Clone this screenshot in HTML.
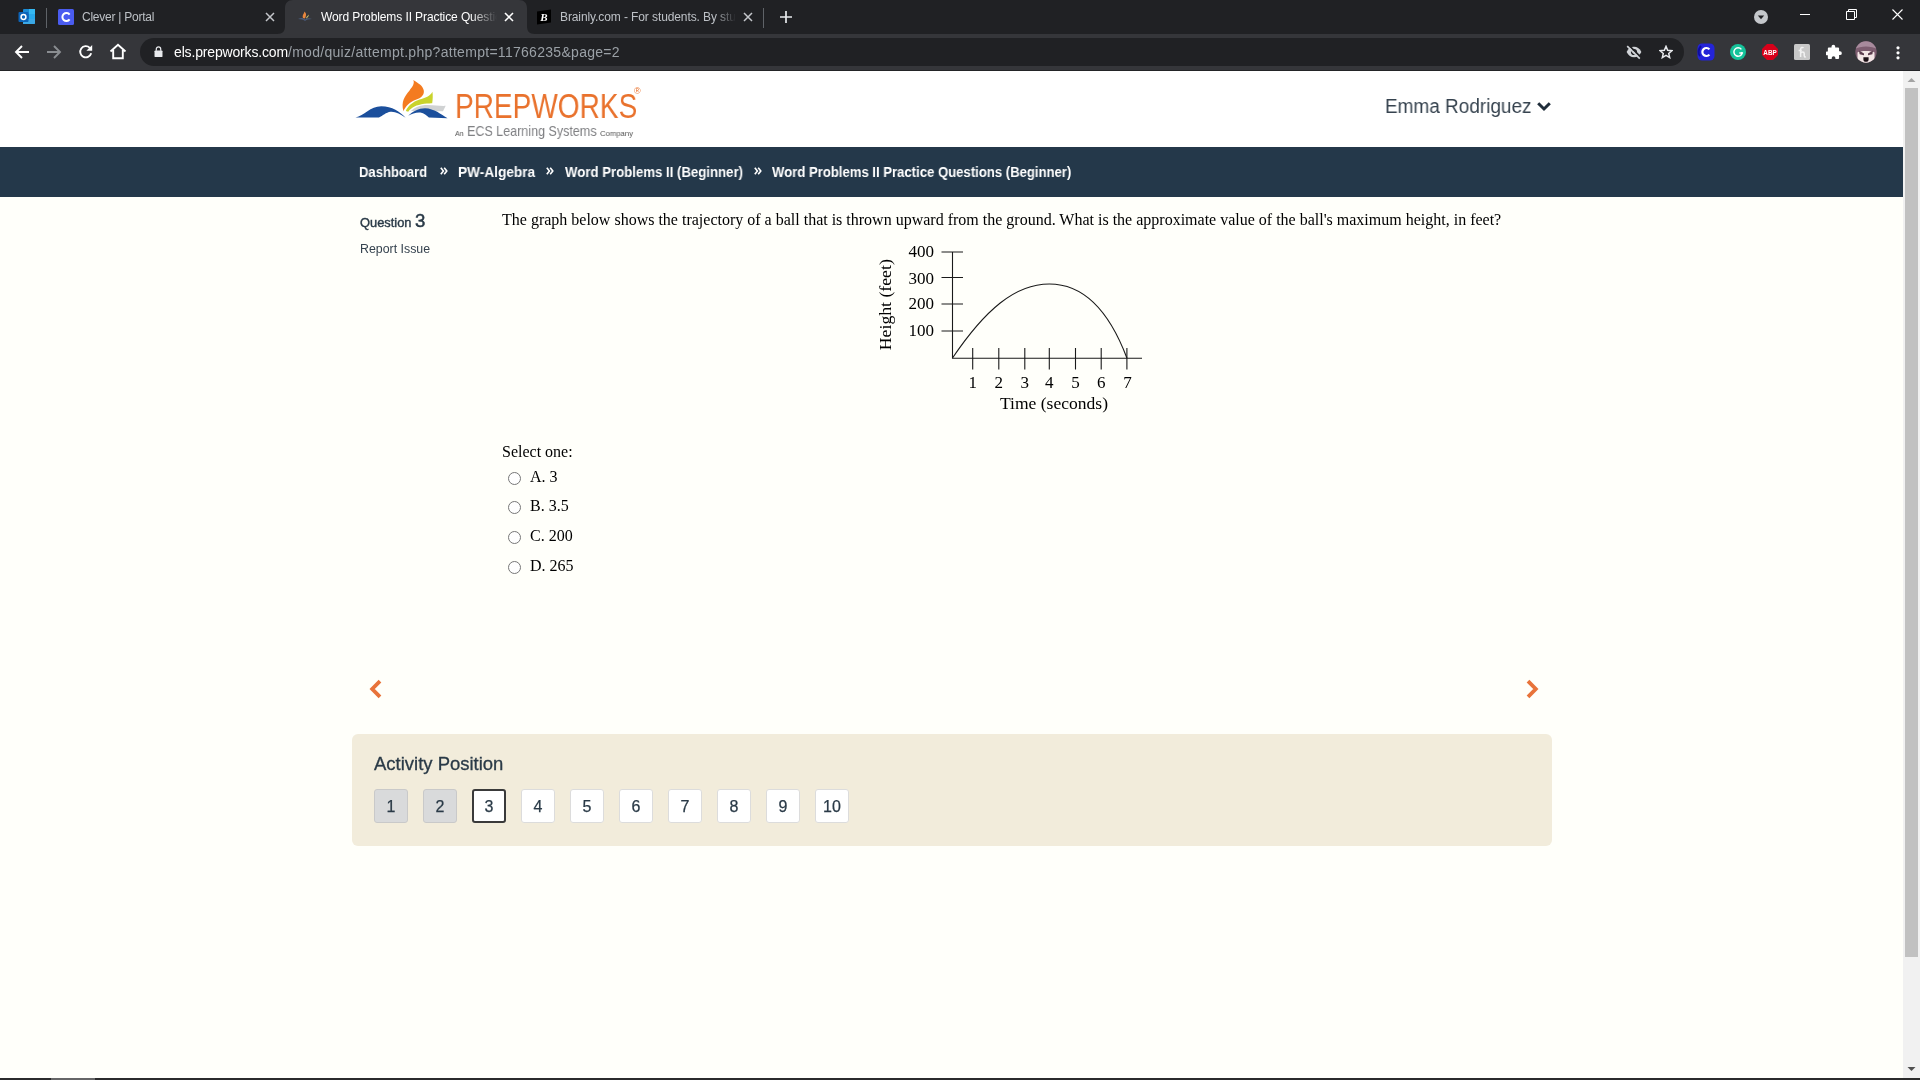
<!DOCTYPE html>
<html lang="en">
<head>
<meta charset="utf-8">
<title>Word Problems II Practice Questions (Beginner)</title>
<style>
*{box-sizing:border-box;margin:0;padding:0}
html,body{width:1920px;height:1080px;overflow:hidden;background:#fffffa;font-family:"Liberation Sans",sans-serif;}
.abs{position:absolute}
#page>*,#chrome>*,#sb,#botbar{will-change:transform}
#chrome{position:absolute;left:0;top:0;width:1920px;height:71px;background:#35363a;}
#tabstrip{position:absolute;left:0;top:0;width:1920px;height:34px;background:#202124;}
#toolbar{position:absolute;left:0;top:34px;width:1920px;height:37px;background:#35363a;}
.tabtxt{position:absolute;top:9px;font-size:12px;line-height:16px;color:#bdc1c6;white-space:nowrap;overflow:hidden;letter-spacing:-0.1px}
#omni{position:absolute;left:140px;top:38px;width:1544px;height:28px;border-radius:14px;background:#202124;}
#url{position:absolute;left:174px;top:43px;font-size:14px;line-height:18px;color:#9aa0a6;white-space:nowrap}
#url b{color:#fff;font-weight:normal;letter-spacing:-0.16px}#url i{font-style:normal;letter-spacing:0.29px}
#page{position:absolute;left:0;top:71px;width:1903px;height:1007px;background:#fffffa;overflow:hidden}
#hdr{position:absolute;left:0;top:0;width:1903px;height:76px;background:#fff}
#nav{position:absolute;left:0;top:76px;width:1903px;height:50px;background:#24384a}
.crumb{position:absolute;top:92px;transform-origin:0 0;font-size:14px;line-height:18px;font-weight:bold;color:#fff;white-space:nowrap}
#sb{position:absolute;left:1903px;top:71px;width:17px;height:1007px;background:#f1f1f1}
#thumb{position:absolute;left:2px;top:17px;width:13px;height:869px;background:#c1c1c1}
#botbar{position:absolute;left:0;top:1078px;width:1920px;height:2px;background:#2b2b2b}
.serif{font-family:"Liberation Serif",serif;color:#000}

.radio{position:absolute;left:508px;width:13px;height:13px;border-radius:50%;border:1px solid #767676;background:#fff}
.ans{left:530px;font-size:16px;line-height:18px;white-space:nowrap}
.pb{position:absolute;top:718px;width:34px;height:34px;border:1px solid #dcdcdc;border-radius:3px;background:#fff;color:#2a3a47;font-size:16px;line-height:34px;text-align:center;-webkit-text-stroke:0.25px #2a3a47}
.pb.done{background:#d9dadb;border-color:#c9c9c9}
.pb.cur{border:2px solid #3a3a3a;line-height:32px}
</style>
</head>
<body>
<div id="chrome">
  <div id="tabstrip"></div>
  <div id="toolbar"></div>
  <div class="abs" style="left:0;top:70px;width:1920px;height:1px;background:#232427"></div>
  <!-- pinned outlook tab -->
  <svg class="abs" style="left:18px;top:8px" width="18" height="18" viewBox="0 0 18 18">
    <rect x="5" y="1" width="12" height="15" rx="1" fill="#1a8ad4"/>
    <rect x="11" y="1" width="6" height="5" fill="#35b8f1"/>
    <rect x="5" y="6" width="6" height="5" fill="#1373c2"/>
    <rect x="11" y="6" width="6" height="5" fill="#28a8ea"/>
    <path d="M5 11h12v4a1 1 0 0 1-1 1H5z" fill="#3aa8e6"/>
    <rect x="0.5" y="4" width="10" height="10" rx="1" fill="#0c64b8"/>
    <circle cx="5.5" cy="9" r="2.4" fill="none" stroke="#fff" stroke-width="1.5"/>
  </svg>
  <div class="abs" style="left:46px;top:8px;width:1px;height:20px;background:#5f6368"></div>
  <!-- clever tab -->
  <svg class="abs" style="left:58px;top:9px" width="16" height="16" viewBox="0 0 16 16">
    <rect width="16" height="16" rx="1.5" fill="#4a5cf0"/>
    <path d="M11.6 5.6A4 4 0 1 0 11.6 10.4" fill="none" stroke="#fff" stroke-width="2"/>
  </svg>
  <div class="tabtxt" style="left:82px;width:170px;letter-spacing:-0.25px">Clever | Portal</div>
  <svg class="abs" style="left:264px;top:11px" width="12" height="12" viewBox="0 0 12 12"><path d="M2 2L10 10M10 2L2 10" stroke="#c4c7cb" stroke-width="1.5" fill="none"/></svg>
  <!-- active tab -->
  <svg class="abs" style="left:277px;top:0" width="258" height="34" viewBox="0 0 258 34">
    <path d="M0 34C6 34 8 31 8 26V8C8 3 11 0 16 0H242C247 0 250 3 250 8V26C250 31 252 34 258 34Z" fill="#35363a"/>
  </svg>
  <svg class="abs" style="left:298px;top:10px" width="16" height="14" viewBox="0 0 16 14">
    <path d="M0 9C3 7.5 5 7.5 7 9.5C9 7.8 11 7.8 14 9C11 9.2 9 9.6 7 11C5 9.6 3 9.2 0 9Z" fill="#4a5a78"/>
    <path d="M5 8C4 5 6 4 6.5 1.5C9 4 8 6 7 8.5Z" fill="#e9873e"/>
    <path d="M8 8C9 6 10 5.5 10.8 4.5C11 6 10 7.5 8 8.6Z" fill="#c9c06a"/>
  </svg>
  <div class="tabtxt" style="left:321px;width:176px;color:#fff;-webkit-mask-image:linear-gradient(90deg,#000 150px,transparent 176px);mask-image:linear-gradient(90deg,#000 150px,transparent 176px)">Word Problems II Practice Questions (Beginner)</div>
  <svg class="abs" style="left:503px;top:11px" width="12" height="12" viewBox="0 0 12 12"><path d="M2 2L10 10M10 2L2 10" stroke="#fff" stroke-width="1.6" fill="none"/></svg>
  <!-- brainly tab -->
  <svg class="abs" style="left:536px;top:9px" width="16" height="16" viewBox="0 0 16 16">
    <path d="M1 2.5L15 0.5V13.5L1 15.5Z" fill="#000"/>
    <text x="8" y="12" font-family="Liberation Serif,serif" font-weight="bold" font-style="italic" font-size="11" fill="#fff" text-anchor="middle">B</text>
  </svg>
  <div class="tabtxt" style="left:560px;width:176px;-webkit-mask-image:linear-gradient(90deg,#000 155px,transparent 176px);mask-image:linear-gradient(90deg,#000 155px,transparent 176px)">Brainly.com - For students. By students.</div>
  <svg class="abs" style="left:742px;top:11px" width="12" height="12" viewBox="0 0 12 12"><path d="M2 2L10 10M10 2L2 10" stroke="#c4c7cb" stroke-width="1.5" fill="none"/></svg>
  <div class="abs" style="left:763px;top:8px;width:1px;height:20px;background:#5f6368"></div>
  <svg class="abs" style="left:779px;top:10px" width="14" height="14" viewBox="0 0 14 14"><path d="M7 1V13M1 7H13" stroke="#e8eaed" stroke-width="1.7" fill="none"/></svg>
  <!-- window controls -->
  <svg class="abs" style="left:1754px;top:10px" width="14" height="14" viewBox="0 0 14 14"><circle cx="7" cy="7" r="7" fill="#c4c7cb"/><path d="M3.8 5.5H10.2L7 9.2Z" fill="#202124"/></svg>
  <div class="abs" style="left:1800px;top:14px;width:10px;height:1px;background:#fff"></div>
  <svg class="abs" style="left:1846px;top:9px" width="11" height="11" viewBox="0 0 11 11"><path d="M0.5 2.5H8.5V10.5H0.5Z M2.5 2.5V0.5H10.5V8.5H8.5" fill="none" stroke="#fff" stroke-width="1"/></svg>
  <svg class="abs" style="left:1892px;top:9px" width="11" height="11" viewBox="0 0 11 11"><path d="M0.5 0.5L10.5 10.5M10.5 0.5L0.5 10.5" fill="none" stroke="#fff" stroke-width="1.1"/></svg>
  <!-- toolbar icons -->
  <svg class="abs" style="left:14px;top:44px" width="16" height="16" viewBox="0 0 16 16"><path d="M15 8H2.5M8 2L2 8L8 14" fill="none" stroke="#fff" stroke-width="1.9"/></svg>
  <svg class="abs" style="left:46px;top:44px" width="16" height="16" viewBox="0 0 16 16"><path d="M1 8H13.5M8 2L14 8L8 14" fill="none" stroke="#8a8d91" stroke-width="1.9"/></svg>
  <svg class="abs" style="left:78px;top:44px" width="16" height="16" viewBox="0 0 16 16"><path d="M13.2 9.3A5.6 5.6 0 1 1 11.8 3.8" fill="none" stroke="#fff" stroke-width="1.9"/><path d="M14.2 1V6.8H8.4Z" fill="#fff"/></svg>
  <svg class="abs" style="left:109px;top:43px" width="18" height="17" viewBox="0 0 18 17"><path d="M1.5 8.5L9 1.8L16.5 8.5M4.2 7V15.3H13.8V7" fill="none" stroke="#fff" stroke-width="1.9" stroke-linejoin="miter"/></svg>
  <div id="omni"></div>
  <svg class="abs" style="left:153.5px;top:46px" width="9" height="11.5" viewBox="0 0 10 13"><rect x="0.5" y="5" width="9" height="7.5" rx="1" fill="#e8eaed"/><path d="M2.5 5.5V3.5A2.5 2.5 0 0 1 7.5 3.5V5.5" fill="none" stroke="#e8eaed" stroke-width="1.4"/></svg>
  <div id="url"><b>els.prepworks.com</b><i>/mod/quiz/attempt.php?attempt=11766235&amp;page=2</i></div>
  <!-- right omnibox icons -->
  <svg class="abs" style="left:1625px;top:44px" width="18" height="16" viewBox="0 0 18 16">
    <path d="M1.6 8C3.4 4.4 6 2.8 9 2.8C12 2.8 14.6 4.4 16.4 8C14.6 11.6 12 13.2 9 13.2C6 13.2 3.4 11.6 1.6 8Z" fill="#d0d3d7"/>
    <circle cx="9" cy="8" r="3.1" fill="#202124"/>
    <circle cx="9" cy="8" r="1.5" fill="#d0d3d7"/>
    <path d="M3.4 0.9L16 13.5" stroke="#202124" stroke-width="1.8"/>
    <path d="M2.2 2.1L14.8 14.7" stroke="#d0d3d7" stroke-width="1.7"/>
  </svg>
  <svg class="abs" style="left:1659px;top:45px" width="14" height="14" viewBox="0 0 16 16"><path d="M8 1.6L9.9 6.1L14.7 6.5L11.1 9.7L12.2 14.4L8 11.9L3.8 14.4L4.9 9.7L1.3 6.5L6.1 6.1Z" fill="none" stroke="#e8eaed" stroke-width="1.7" stroke-linejoin="miter"/></svg>
  <!-- extensions -->
  <svg class="abs" style="left:1697px;top:43px" width="18" height="18" viewBox="0 0 18 18"><rect x="0.5" y="0.5" width="17" height="17" rx="4.5" fill="#2424d8"/><path d="M3 13C1 11 1 6 4 3" stroke="#0d0da0" stroke-width="2" fill="none"/><path d="M12.4 6.4A4 4 0 1 0 12.4 11.6" fill="none" stroke="#fff" stroke-width="2.2"/></svg>
  <svg class="abs" style="left:1730px;top:44px" width="16" height="16" viewBox="0 0 16 16"><circle cx="8" cy="8" r="8" fill="#15c39a"/><path d="M11.4 5.4A4.2 4.2 0 1 0 12.2 9H9.3" fill="none" stroke="#fff" stroke-width="1.5"/><path d="M11 10.6L13 9L11.3 7.8Z" fill="#fff"/></svg>
  <svg class="abs" style="left:1762px;top:44px" width="16" height="16" viewBox="0 0 16 16"><path d="M5 0H11L16 5V11L11 16H5L0 11V5Z" fill="#d8001a"/><circle cx="8" cy="8" r="7.6" fill="#d8001a"/><text x="8" y="10.9" font-family="Liberation Sans,sans-serif" font-weight="bold" font-size="8" fill="#fff" text-anchor="middle" textLength="13.4" lengthAdjust="spacingAndGlyphs">ABP</text></svg>
  <svg class="abs" style="left:1794px;top:44px" width="16" height="16" viewBox="0 0 16 16"><rect width="16" height="16" rx="1.5" fill="#c8c8c8"/><path d="M4.6 6.6H7.8M6.6 13V5.4C6.6 3.4 8.6 2.8 9.4 4.2M6.6 9.4C7.4 7.6 10.2 7.4 10.2 9.6V11.6C10.2 12.8 11 13.2 11.8 12.6" fill="none" stroke="#f2f2f2" stroke-width="1.5"/></svg>
  <svg class="abs" style="left:1826px;top:44px" width="15.5" height="15.5" viewBox="1.5 0.5 16 16"><path d="M7.2 3.2A1.9 1.9 0 0 1 11 3.2V4.2H14A1 1 0 0 1 15 5.2V8H15.9A1.9 1.9 0 0 1 15.9 11.9H15V15A1 1 0 0 1 14 16H11.2V15A1.9 1.9 0 0 0 7.4 15V16H4.4A1 1 0 0 1 3.4 15V12H2.6A1.9 1.9 0 0 1 2.6 8.2H3.4V5.2A1 1 0 0 1 4.4 4.2H7.2Z" fill="#fff"/></svg>
  <svg class="abs" style="left:1855px;top:41px" width="22" height="22" viewBox="0 0 22 22">
    <defs><clipPath id="avc"><circle cx="11" cy="11" r="10.7"/></clipPath></defs>
    <g clip-path="url(#avc)">
      <rect width="22" height="22" fill="#7d5d70"/>
      <path d="M0 0H22V8C17 4.5 5 4.5 0 8Z" fill="#a78a9c"/>
      <path d="M2.5 11.5C5 9.5 17 9.5 19.5 11.5V22H2.5Z" fill="#f3e6e6"/>
      <path d="M4 9.5L9 12.6L9 14.2L4.6 13.2ZM18 9.5L13 12.6L13 14.2L17.4 13.2Z" fill="#5a3c4c"/>
      <path d="M8.4 16.2H13.6V18.4A2.6 2.4 0 0 1 8.4 18.4Z" fill="#1c1016"/>
    </g>
  </svg>
  <svg class="abs" style="left:1896px;top:45px" width="4" height="16" viewBox="0 0 4 16"><circle cx="2" cy="2.8" r="1.6" fill="#fff"/><circle cx="2" cy="7.8" r="1.6" fill="#fff"/><circle cx="2" cy="12.8" r="1.6" fill="#fff"/></svg>
</div>
<div id="page">
  <div id="hdr"></div>
  <div id="nav"></div>
  <!-- logo: coordinates are page-relative (page top = 71) -->
  <svg class="abs" style="left:350px;top:4px" width="150" height="70" viewBox="0 0 1920 896">
    <path d="M1225 395C1150 400 1060 380 960 385C880 392 820 420 780 460L1190 465Z" fill="#d0d2d3"/>
    <path d="M1055 215C1030 270 960 295 890 315C800 345 740 400 715 460L745 470C790 410 850 385 950 368C1000 362 1040 362 1052 360C1060 310 1062 260 1055 215Z" fill="#c9d32c"/>
    <path d="M810 65C830 110 800 150 760 200C700 270 650 340 685 465C710 400 760 350 850 315C920 285 950 250 945 200C935 140 880 110 810 65Z" fill="#f47b20"/>
    <path d="M70 545C180 520 260 400 400 400C540 400 640 470 712 548C650 500 580 465 520 470C460 478 420 520 370 545Z" fill="#1b4f9c"/>
    <path d="M745 520C800 470 880 425 960 425C1080 430 1160 500 1250 555L1010 545C980 520 950 490 900 480C850 475 790 495 745 520Z" fill="#1b4f9c"/>
  </svg>
  <div id="pw" class="abs" style="transform:scaleX(0.801);left:454.6px;top:16.7px;font-size:35px;line-height:36px;color:#e9722d;white-space:nowrap;transform-origin:0 0;">PREPWORKS</div>
  <div class="abs" style="left:634.2px;top:15px;font-size:9px;line-height:10px;color:#e9722d">®</div>
  <div id="ecs0" class="abs" style="transform:scaleX(0.8778);left:455.2px;top:58px;font-size:8px;line-height:10px;color:#555;white-space:nowrap;transform-origin:0 0;">An</div>
  <div id="ecs" class="abs" style="transform:scaleX(0.8639);left:466.8px;top:52.4px;font-size:14.5px;line-height:16px;color:#808184;white-space:nowrap;transform-origin:0 0;">ECS Learning Systems</div>
  <div id="ecs2" class="abs" style="transform:scaleX(0.9635);left:599.5px;top:58px;font-size:8px;line-height:10px;color:#555;white-space:nowrap;transform-origin:0 0;">Company</div>
  <div id="user" class="abs" style="transform:scaleX(0.948);left:1385px;top:23px;font-size:20px;line-height:24px;color:#36434f;white-space:nowrap;transform-origin:0 0;">Emma Rodriguez</div>
  <svg class="abs" style="left:1536px;top:29.8px" width="16" height="12" viewBox="0 0 16 12"><path d="M2.2 2.2L8 8L13.8 2.2" fill="none" stroke="#1f2d3a" stroke-width="3"/></svg>
  <!-- breadcrumbs -->
  <div id="c1" class="crumb" style="transform:scaleX(0.933);left:358.9px">Dashboard</div>
  <div id="c2" class="crumb" style="transform:scaleX(0.976);left:457.5px">PW-Algebra</div>
  <div id="c3" class="crumb" style="transform:scaleX(0.943);left:564.5px">Word Problems II (Beginner)</div>
  <div id="c4" class="crumb" style="transform:scaleX(0.937);left:771.5px">Word Problems II Practice Questions (Beginner)</div>
  <svg class="abs" style="left:440px;top:95.5px" width="8" height="8" viewBox="0 0 8 8"><path d="M0.8 0.8L3.4 4L0.8 7.2M4.2 0.8L6.8 4L4.2 7.2" fill="none" stroke="#fff" stroke-width="1.6"/></svg>
  <svg class="abs" style="left:546px;top:95.5px" width="8" height="8" viewBox="0 0 8 8"><path d="M0.8 0.8L3.4 4L0.8 7.2M4.2 0.8L6.8 4L4.2 7.2" fill="none" stroke="#fff" stroke-width="1.6"/></svg>
  <svg class="abs" style="left:753.5px;top:95.5px" width="8" height="8" viewBox="0 0 8 8"><path d="M0.8 0.8L3.4 4L0.8 7.2M4.2 0.8L6.8 4L4.2 7.2" fill="none" stroke="#fff" stroke-width="1.6"/></svg>
  <!-- question info -->
  <div id="qn" class="abs" style="transform:scaleX(1.0049);left:359.5px;top:138px;font-size:12.8px;line-height:24px;color:#2a3a47;-webkit-text-stroke:0.4px #2a3a47;white-space:nowrap;transform-origin:0 0;">Question <span style="font-size:18.5px;-webkit-text-stroke:0.5px #2a3a47">3</span></div>
  <div id="ri" class="abs" style="transform:scaleX(1.03);left:359.5px;top:170px;font-size:12px;line-height:16px;color:#36434f;white-space:nowrap;transform-origin:0 0;">Report Issue</div>
  <!-- question text -->
  <div id="qt" class="abs serif" style="left:502px;top:140px;font-size:16px;line-height:18px;white-space:nowrap;transform-origin:0 0;">The graph below shows the trajectory of a ball that is thrown upward from the ground. What is the approximate value of the ball's maximum height, in feet?</div>
  <!-- graph -->
  <svg class="abs" style="left:860px;top:164px" width="300" height="185" viewBox="860 235 300 185">
    <g fill="none" stroke="#1a1a1a" stroke-width="1.1">
      <path d="M952.5 252V358.3H1142"/>
      <path d="M941.5 252H963M941.5 277.5H963M941.5 304H963M941.5 331H963"/>
      <path d="M972.7 348V369.4M998.8 348V369.4M1024.8 348V369.4M1049.3 348V369.4M1075.5 348V369.4M1101.2 348V369.4M1126.9 348V369.4"/>
      <path d="M952.5 358C985 310 1015 284 1049.3 284C1087 284 1111 316 1126.9 358"/>
    </g>
    <g font-family="Liberation Serif,serif" font-size="17" fill="#000">
      <text x="934" y="257.3" text-anchor="end">400</text>
      <text x="934" y="283.8" text-anchor="end">300</text>
      <text x="934" y="309.3" text-anchor="end">200</text>
      <text x="934" y="336.1" text-anchor="end">100</text>
      <text x="972.7" y="388.3" text-anchor="middle">1</text>
      <text x="998.8" y="388.3" text-anchor="middle">2</text>
      <text x="1024.8" y="388.3" text-anchor="middle">3</text>
      <text x="1049.3" y="388.3" text-anchor="middle">4</text>
      <text x="1075.5" y="388.3" text-anchor="middle">5</text>
      <text x="1101.2" y="388.3" text-anchor="middle">6</text>
      <text x="1127.5" y="388.3" text-anchor="middle">7</text>
      <text x="1054" y="409" text-anchor="middle" textLength="108" lengthAdjust="spacingAndGlyphs">Time (seconds)</text>
      <text transform="translate(891 304.7) rotate(-90)" text-anchor="middle" textLength="91" lengthAdjust="spacingAndGlyphs">Height (feet)</text>
    </g>
  </svg>
  <!-- answers -->
  <div id="so" class="abs serif" style="left:502px;top:372px;font-size:16px;line-height:18px;white-space:nowrap">Select one:</div>
  <div class="radio" style="top:400.5px"></div>
  <div class="radio" style="top:429.5px"></div>
  <div class="radio" style="top:459.5px"></div>
  <div class="radio" style="top:489.5px"></div>
  <div class="abs serif ans" style="top:397px">A. 3</div>
  <div class="abs serif ans" style="top:426px">B. 3.5</div>
  <div class="abs serif ans" style="top:456px">C. 200</div>
  <div class="abs serif ans" style="top:486px">D. 265</div>
  <!-- prev / next -->
  <svg class="abs" style="left:368px;top:608px" width="16" height="20" viewBox="0 0 16 20"><path d="M12 2.2L4.2 10L12 17.8" fill="none" stroke="#e8733a" stroke-width="3.8"/></svg>
  <svg class="abs" style="left:1524px;top:608px" width="16" height="20" viewBox="0 0 16 20"><path d="M4 2.2L11.8 10L4 17.8" fill="none" stroke="#e8733a" stroke-width="3.8"/></svg>
  <!-- activity position -->
  <div class="abs" style="left:352px;top:663px;width:1200px;height:112px;background:#f2ecdb;border-radius:6px"></div>
  <div id="ap" class="abs" style="transform:scaleX(1.0108);left:374px;top:682px;font-size:18.3px;line-height:22px;color:#2a3a47;white-space:nowrap;transform-origin:0 0;-webkit-text-stroke:0.3px #2a3a47">Activity Position</div>
  <div class="pb done" style="left:374px">1</div>
  <div class="pb done" style="left:423px">2</div>
  <div class="pb cur" style="left:472px">3</div>
  <div class="pb" style="left:521px">4</div>
  <div class="pb" style="left:570px">5</div>
  <div class="pb" style="left:619px">6</div>
  <div class="pb" style="left:668px">7</div>
  <div class="pb" style="left:717px">8</div>
  <div class="pb" style="left:766px">9</div>
  <div class="pb" style="left:815px">10</div>
</div>
<div id="sb"><div id="thumb"></div><svg class="abs" style="left:4px;top:6px" width="9" height="6" viewBox="0 0 9 6"><path d="M0.5 5L4.5 1L8.5 5Z" fill="#a3a3a3"/></svg><svg class="abs" style="left:4px;top:995px" width="9" height="6" viewBox="0 0 9 6"><path d="M0.5 1L4.5 5L8.5 1Z" fill="#505050"/></svg></div>
<div id="botbar"><div class="abs" style="left:51px;top:0;width:44px;height:2px;background:#666"></div></div>
</body>
</html>
